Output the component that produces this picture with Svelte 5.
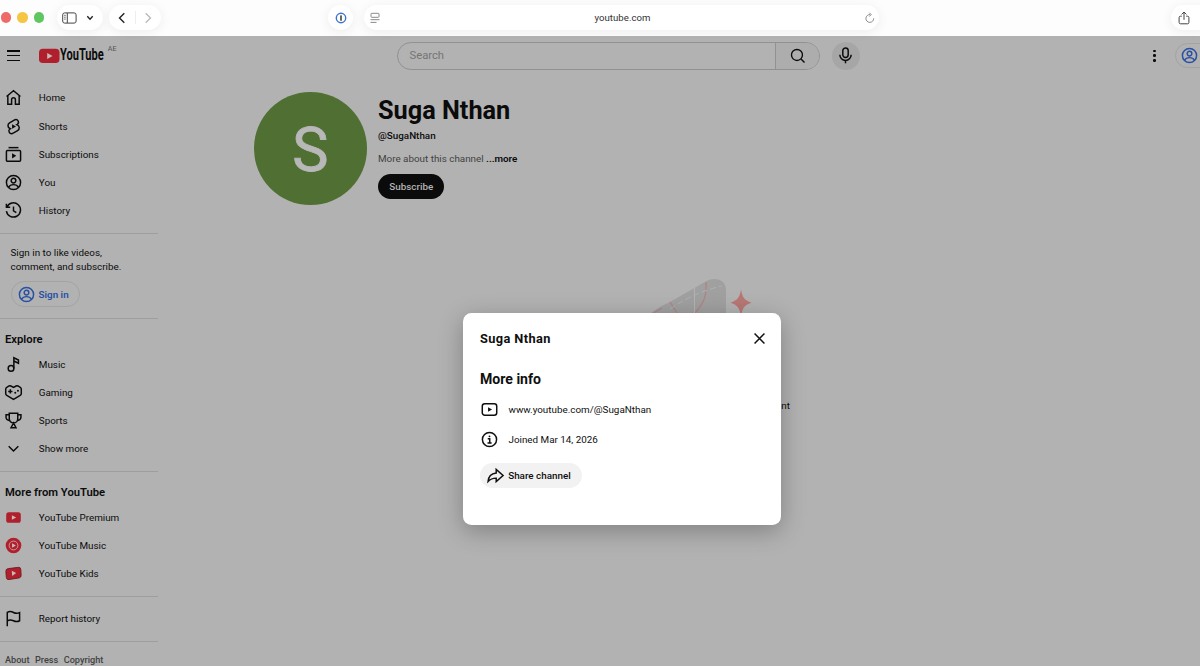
<script lang="ts">
	type Item = { icon: string; label: string };

	const mainItems: Item[] = [
		{ icon: 'home', label: 'Home' },
		{ icon: 'shorts', label: 'Shorts' },
		{ icon: 'subs', label: 'Subscriptions' },
		{ icon: 'user', label: 'You' },
		{ icon: 'history', label: 'History' },
	];

	const explore: Item[] = [
		{ icon: 'music', label: 'Music' },
		{ icon: 'gaming', label: 'Gaming' },
		{ icon: 'sports', label: 'Sports' },
		{ icon: 'chevron', label: 'Show more' },
	];

	const more: Item[] = [
		{ icon: 'premium', label: 'YouTube Premium' },
		{ icon: 'ytmusic', label: 'YouTube Music' },
		{ icon: 'kids', label: 'YouTube Kids' },
	];

	let open = $state(true);
</script>

{#snippet icon(name: string)}
	<svg class="icon" viewBox="0 0 24 24">
		{#if name === 'home'}
			<path d="M2.2 10.6 12 2.4l9.8 8.2M4 9.5V21.4h5.3V15a2.7 2.7 0 0 1 5.4 0v6.4H20V9.5" />
		{:else if name === 'shorts'}
			<path d="M14.2 2.4 6.4 6.9A4.4 4.4 0 0 0 7 14.8l.6.3-.9.5a3.8 3.8 0 0 0 3.6 6.4l7.5-4.3a4.4 4.4 0 0 0-.6-8l-.6-.3.9-.5a3.7 3.7 0 0 0-3.3-6.5Z" />
			<path class="solid" d="m10 8.7 5.5 3.3-5.5 3.3Z" />
		{:else if name === 'subs'}
			<path d="M5 2.3h14" />
			<rect x="2" y="6.3" width="20" height="15.2" rx="1.5" />
			<path class="solid" d="m10 10.3 6 3.6-6 3.6Z" />
		{:else if name === 'user'}
			<circle cx="12" cy="12" r="10" />
			<circle cx="12" cy="9.3" r="3.3" />
			<path d="M5 19c1.4-2.7 4-4 7-4s5.6 1.3 7 4" />
		{:else if name === 'history'}
			<path d="M2 2.3v5.2h5.3M2.7 7.3A10 10 0 1 1 2 12.8M12 6.5v6l4 2.4" />
		{:else if name === 'music'}
			<circle cx="8.5" cy="17.5" r="4" />
			<path d="M12.5 17.5V2.5l6.5 3.2v4.5l-6.5-3.2" />
		{:else if name === 'gaming'}
			<path d="M12 4.8 8.3 2.8a3 3 0 0 0-2.6 0L2.5 4.7A3 3 0 0 0 1 7.3v6.2a3 3 0 0 0 1.5 2.6L12 21.6l9.5-5.5a3 3 0 0 0 1.5-2.6V7.3a3 3 0 0 0-1.5-2.6l-3.2-1.9a3 3 0 0 0-2.6 0Z" />
			<path d="M7.5 7.5v6M4.5 10.5h6" />
			<circle class="solid" cx="14.5" cy="12.5" r="1.4" />
			<circle class="solid" cx="18.3" cy="9.5" r="1.4" />
		{:else if name === 'sports'}
			<path d="M6 1.8h12v7.7a6 6 0 0 1-12 0ZM6 4H1.5v3.5A4.5 4.5 0 0 0 6 12M18 4h4.5v3.5A4.5 4.5 0 0 1 18 12M12 15.5 8.5 22.2h7Z" />
		{:else if name === 'chevron'}
			<path d="m5.2 8.800 6.800 6.800 6.800-6.800" />
		{:else if name === 'flag'}
			<path d="M3.2 23V3.5c3-1.9 6-1.5 8.8 0s5.600 1.700 8.600.2v11.500c-3 1.600-5.800 1.400-8.600 0s-5.800-1.800-8.800.2" />
		{:else if name === 'premium'}
			<rect class="red" x="1.7" y="4.7" width="20.6" height="14.8" rx="3.6" />
			<path class="play" d="m9.7 8.9 6 3.2-6 3.2Z" />
		{:else if name === 'ytmusic'}
			<circle class="red" cx="12" cy="12" r="11" />
			<circle class="ring" cx="12" cy="12" r="6.2" />
			<path class="play" d="m10 8.7 5.3 3.3-5.3 3.3Z" />
		{:else if name === 'kids'}
			<path class="kids" d="M4.5 5.1 19 3.3q3-.3 3.3 2.6l.5 8.6q.2 3-2.8 3.7L5.6 20.6q-3.3.5-3.7-2.800L1.200 9q-.2-3.500 3.300-3.900Z" />
			<path class="play" d="m9.5 8.2 6.3 3.2-5.6 4Z" />
		{:else if name === 'video'}
			<rect x="1.8" y="4" width="20.4" height="16" rx="3.5" />
			<path class="solid" d="m10 8.7 5.6 3.3-5.6 3.3Z" />
		{:else if name === 'info'}
			<circle cx="12" cy="12" r="10" />
			<path d="M9.5 11h2.8v5.500M9.200 16.800h5.800" />
			<circle class="solid" cx="12" cy="7.5" r="1.3" />
		{:else if name === 'share'}
			<path d="M13 3.3v5.2C6 9.3 2 13.5 1.5 20.5c3-3.300 6.700-4.800 11.500-4.800v5l9.700-8.700Z" />
		{:else if name === 'search'}
			<circle cx="10.8" cy="10.8" r="8.5" />
			<path d="m17 17 5.5 5.5" />
		{:else if name === 'mic'}
			<rect x="8.2" y="1.3" width="7.6" height="13.4" rx="3.8" />
			<path d="M4 11a8 8 0 0 0 16 0M12 19v4" />
		{:else if name === 'close'}
			<path d="m5 5 14 14M19 5 5 19" />
		{/if}
	</svg>
{/snippet}

{#snippet row(item: Item)}
	<a class="row" href="#{item.icon}">
		{@render icon(item.icon)}
		<span>{item.label}</span>
	</a>
{/snippet}

<div class="window">
	<div class="toolbar">
		<div class="lights">
			<i class="close-light"></i>
			<i class="min-light"></i>
			<i class="max-light"></i>
		</div>
		<div class="capsule side-toggle">
			<svg width="15" height="12" viewBox="0 0 15 12">
				<rect x=".7" y=".9" width="13.4" height="10.2" rx="2" />
				<path d="M5.3 1v10M2.3 3.3h1.3M2.3 5.2h1.3M2.3 7.1h1.3" />
			</svg>
			<svg width="8" height="6" viewBox="0 0 8 6"><path class="bold" d="M1.3 1.3 4 4.2l2.7-2.9" /></svg>
		</div>
		<div class="capsule nav">
			<svg width="8" height="12" viewBox="0 0 8 12"><path class="bold" d="M6.3 1.2 1.5 6l4.8 4.8" /></svg>
			<span class="split"></span>
			<svg class="off" width="8" height="12" viewBox="0 0 8 12"><path class="bold" d="M1.7 1.2 6.5 6l-4.8 4.8" /></svg>
		</div>
		<div class="capsule extension">
			<svg width="12" height="12" viewBox="0 0 12 12">
				<circle class="op-ring" cx="6" cy="6" r="4.7" />
				<rect class="op-key" x="5" y="3.2" width="2" height="5.6" rx=".6" />
			</svg>
		</div>
		<div class="capsule address">
			<svg width="10" height="12" viewBox="0 0 10 12">
				<rect x="1" y="1.3" width="8" height="4" rx=".8" />
				<path d="M.5 7.7h9M.5 10.4h6" />
			</svg>
			<span class="host">youtube.com</span>
			<svg width="10" height="12" viewBox="0 0 10 12">
				<path d="M8.7 6.300a3.900 3.900 0 1 1-3.500-3.700M4.300.7l1.900 1.900-1.900 1.900" />
			</svg>
		</div>
		<div class="capsule share-btn">
			<svg width="12" height="14" viewBox="0 0 12 14">
				<path d="M3.8 5.200H2.500a1.400 1.400 0 0 0-1.400 1.400v4.800a1.400 1.400 0 0 0 1.400 1.400h7a1.400 1.400 0 0 0 1.400-1.400V6.600a1.400 1.400 0 0 0-1.400-1.400H8.200M6 8.800V1.200M3.600 3.400 6 1l2.400 2.400" />
			</svg>
		</div>
	</div>

	<div class="page">
		<header>
			<button class="burger" aria-label="Guide"><i></i><i></i><i></i></button>
			<svg class="logo" width="21" height="20" viewBox="0 0 21 20">
				<rect class="red" x="0" y="2.7" width="20.5" height="14.4" rx="3.8" />
				<path class="play" d="m8.2 6.9 5.4 3-5.4 3Z" />
			</svg>
			<div class="wordmark"><span>YouTube</span></div>
			<span class="country">AE</span>
			<div class="search">
				<div class="field">Search</div>
				<button class="search-btn" aria-label="Search">{@render icon('search')}</button>
			</div>
			<button class="mic" aria-label="Voice">{@render icon('mic')}</button>
			<div class="dots"><i></i><i></i><i></i></div>
			<button class="account" aria-label="Account">{@render icon('user')}</button>
		</header>

		<div class="body">
			<nav class="sidebar">
				<section>
					{#each mainItems as item}{@render row(item)}{/each}
				</section>
				<section class="signin">
					<p>Sign in to like videos,<br />comment, and subscribe.</p>
					<button class="signin-btn">{@render icon('user')}Sign in</button>
				</section>
				<section>
					<h3>Explore</h3>
					{#each explore as item}{@render row(item)}{/each}
				</section>
				<section>
					<h3>More from YouTube</h3>
					{#each more as item}{@render row(item)}{/each}
				</section>
				<section>
					{@render row({ icon: 'flag', label: 'Report history' })}
				</section>
				<footer><span>About</span><span>Press</span><span>Copyright</span></footer>
			</nav>

			<main>
				<div class="channel">
					<div class="avatar">S</div>
					<div class="meta">
						<h1>Suga Nthan</h1>
						<div class="handle">@SugaNthan</div>
						<div class="about">More about this channel <b>...more</b></div>
						<button class="subscribe">Subscribe</button>
					</div>
				</div>
				<div class="empty">
					<svg width="130" height="60" viewBox="0 0 130 60">
						<path class="cone" d="M-6 42Q2 32 20 24L54 4.500C64-2 75 1 76 11v49H-6Z" />
						<path class="cone-line" d="M56 4c1 15-3 22-11 31M20 24l7 11M2 36l10-6" />
						<path class="cone-light" d="M44.500 9v40" />
						<path class="cone-dash" d="M20 31Q45 14 72 8" />
						<path class="star" d="M91 11.500c1.500 8 3 10.500 10.500 13.200-7.500 2.700-9 5.200-10.500 13.300-1.500-8-3-10.600-10.500-13.300 7.500-2.700 9-5.200 10.500-13.200Z" />
					</svg>
					<p>content</p>
				</div>
			</main>
		</div>
	</div>

	{#if open}
		<div class="dialog" role="dialog">
			<div class="dialog-head">
				<h2>Suga Nthan</h2>
				<button class="x" aria-label="Close" onclick={() => (open = false)}>{@render icon('close')}</button>
			</div>
			<h4>More info</h4>
			<div class="info">{@render icon('video')}<span>www.youtube.com/@SugaNthan</span></div>
			<div class="info">{@render icon('info')}<span>Joined Mar 14, 2026</span></div>
			<button class="share">{@render icon('share')}Share channel</button>
		</div>
	{/if}
</div>

<style>
	:global(body) {
		margin: 0;
		overflow: hidden;
	}

	.window {
		position: relative;
		width: 1200px;
		height: 666px;
		overflow: hidden;
		background: #b2b2b2;
		color: #0b0b0b;
		font-family: Roboto, sans-serif;
		font-size: 9.86px;
	}

	.window * {
		box-sizing: border-box;
	}

	button {
		padding: 0;
		border: 0;
		background: none;
		color: inherit;
		font: inherit;
	}

	h1, h2, h3, h4, p {
		margin: 0;
	}

	svg {
		display: block;
		flex: none;
		fill: none;
		stroke: currentColor;
	}

	.icon {
		width: 17px;
		height: 17px;
		stroke-width: 2.1;
		overflow: visible;
	}

	.solid {
		fill: currentColor;
		stroke: none;
	}

	.red {
		fill: #b01f2c;
		stroke: none;
	}

	.play {
		fill: #c9b9ba;
		stroke: none;
	}

	.ring {
		stroke: #c39a9d;
		stroke-width: 1.4;
	}

	.kids {
		fill: #b01f2c;
		stroke: #6b1a20;
		stroke-width: 1.2;
	}

	/* Browser toolbar */
	.toolbar {
		position: relative;
		z-index: 1;
		display: flex;
		align-items: center;
		height: 36px;
		padding-bottom: 1px;
		background: #fdfdfd;
		color: #444;
	}

	.toolbar > *,
	header > * {
		flex: none;
	}

	.lights {
		display: flex;
		gap: 6px;
		width: 57px;
		padding-left: 1px;
	}

	.lights i {
		width: 10.4px;
		height: 10.4px;
		border-radius: 50%;
	}

	.close-light { background: #ee6a68; }
	.min-light { background: #f5c644; }
	.max-light { background: #5fc75f; }

	.capsule {
		display: flex;
		align-items: center;
		height: 25px;
		border-radius: 13px;
		background: #fff;
		box-shadow: 0 2px 12px rgba(0, 0, 0, 0.07);
	}

	.side-toggle {
		width: 46px;
		padding-left: 5px;
		gap: 9px;
	}

	.bold {
		stroke-width: 1.4;
		stroke: #222;
	}

	.nav {
		width: 52px;
		margin-left: 6px;
		justify-content: space-between;
		padding: 0 9px;
	}

	.split {
		width: 1px;
		height: 13px;
		background: #eee;
	}

	.off .bold {
		stroke: #bbb;
	}

	.extension {
		width: 25px;
		margin-left: 167px;
		justify-content: center;
	}

	.op-ring {
		stroke: #3b73d1;
		stroke-width: 1.4;
	}

	.op-key {
		fill: #6a6a5c;
		stroke: none;
	}

	.address {
		width: 515px;
		margin-left: 11px;
		padding: 0 4px 0 6px;
		justify-content: space-between;
		color: #8a8a8a;
	}

	.host {
		color: #333;
		font-size: 9.6px;
		letter-spacing: 0.05px;
	}

	.share-btn {
		width: 40px;
		margin-left: 292px;
		padding-left: 7px;
	}

	/* Masthead */
	header {
		display: flex;
		align-items: center;
		height: 39.4px;
	}

	.burger {
		width: 13px;
		margin-left: 7px;
		display: grid;
		gap: 3.4px;
	}

	.burger i {
		height: 1.5px;
		background: #0b0b0b;
	}

	.logo {
		margin-left: 18.7px;
	}

	.wordmark {
		width: 46px;
		padding-top: 1px;
		line-height: 20px;
	}

	.wordmark span {
		display: inline-block;
		transform: scaleX(0.67);
		transform-origin: left;
		font-size: 16.5px;
		font-weight: 700;
	}

	.country {
		align-self: flex-start;
		width: 12px;
		margin: 8px 0 0 2px;
		color: #555;
		font-size: 7.2px;
		line-height: 9px;
	}

	.search {
		display: flex;
		width: 423px;
		height: 28.2px;
		margin-left: 277.8px;
		border: 1px solid #919191;
		border-radius: 15px;
		overflow: hidden;
	}

	.field {
		flex: 1;
		padding-left: 11px;
		line-height: 26.5px;
		font-size: 11.26px;
		color: #757575;
	}

	.search-btn {
		width: 44.5px;
		display: grid;
		place-items: center;
		border-left: 1px solid #919191;
		background: #adadad;
	}

	.search-btn .icon {
		width: 15.5px;
		height: 15.5px;
	}

	.mic {
		display: grid;
		place-items: center;
		width: 28px;
		height: 28px;
		margin-left: 11.5px;
		border-radius: 50%;
		background: #a6a6a6;
	}

	.dots {
		display: grid;
		gap: 2px;
		margin-left: 293px;
	}

	.dots i {
		width: 2.7px;
		height: 2.7px;
		border-radius: 50%;
		background: #0b0b0b;
	}

	.account {
		width: 60px;
		height: 25.5px;
		margin-left: 19px;
		padding-left: 5.5px;
		border: 1px solid #a3a3a3;
		border-radius: 13px;
		color: #2850a4;
	}

	/* Sidebar */
	.body {
		display: flex;
	}

	.sidebar {
		width: 157.5px;
		flex: none;
	}

	section {
		padding: 8.4px 0;
		border-bottom: 1px solid #9e9e9e;
	}

	section + section {
		padding-top: 7.4px;
	}

	.row {
		display: flex;
		align-items: center;
		gap: 17px;
		height: 28.16px;
		padding-left: 4.8px;
		color: inherit;
		text-decoration: none;
	}

	h3 {
		height: 23.6px;
		padding-left: 5px;
		font-size: 11.26px;
		font-weight: 600;
		line-height: 25.4px;
	}

	.signin {
		height: 85.4px;
		padding-left: 10.5px;
	}

	.signin p {
		padding-top: 4.6px;
		line-height: 14.1px;
		letter-spacing: 0.02px;
	}

	.signin-btn {
		display: flex;
		align-items: center;
		gap: 4px;
		height: 25.4px;
		margin-top: 7.3px;
		padding: 0 10.5px 0 6px;
		border: 1px solid #a3a3a3;
		border-radius: 13px;
		color: #2850a4;
		font-weight: 600;
	}

	footer {
		display: flex;
		gap: 5.5px;
		padding: 12.6px 0 0 5px;
		color: #424242;
		font-size: 9.15px;
		font-weight: 500;
	}

	/* Channel */
	main {
		flex: 1;
	}

	.channel {
		display: flex;
		padding: 17px 0 0 96.5px;
	}

	.avatar {
		width: 112.7px;
		height: 112.7px;
		border-radius: 50%;
		background: #4f7032;
		color: #b8b8b8;
		font-size: 61px;
		line-height: 116px;
		text-align: center;
		-webkit-text-stroke: 0.8px #b8b8b8;
	}

	.meta {
		padding-left: 11.3px;
	}

	h1 {
		margin-top: 1.4px;
		font-size: 25.3px;
		line-height: 33px;
	}

	.handle {
		margin-top: 2.7px;
		font-weight: 500;
		line-height: 14px;
	}

	.about {
		margin-top: 8.4px;
		color: #424242;
		line-height: 14px;
	}

	.about b {
		color: #0b0b0b;
		font-weight: 600;
	}

	.subscribe {
		width: 66.5px;
		height: 25.3px;
		margin-top: 8px;
		border-radius: 13px;
		background: #0b0b0b;
		color: #b2b2b2;
		font-weight: 500;
	}

	.empty {
		width: 200px;
		margin: 73px 0 0 432.5px;
	}

	.empty svg {
		margin-left: 60px;
		stroke: none;
	}

	.empty p {
		margin-top: 61.5px;
		text-align: right;
	}

	.cone { fill: #a0a0a0; }
	.cone-line { stroke: #ad8587; stroke-width: 1.3; }
	.cone-light { stroke: #b3b3b3; }
	.cone-dash { stroke: #b0b0b0; stroke-dasharray: 6 3; }
	.star { fill: #b87774; }

	/* Dialog sits over the dimmed page */
	.dialog {
		position: absolute;
		left: 463px;
		top: 312.5px;
		z-index: 2;
		width: 317.5px;
		height: 212.5px;
		padding: 17px;
		border-radius: 8.5px;
		background: #fff;
		color: #0f0f0f;
		box-shadow: 0 6px 24px rgba(0, 0, 0, 0.28);
	}

	.dialog-head {
		display: flex;
		align-items: center;
		justify-content: space-between;
		height: 17px;
	}

	h2 {
		font-size: 12.8px;
		letter-spacing: 0.38px;
	}

	.x {
		margin-right: -4px;
	}

	h4 {
		margin-top: 23px;
		font-size: 14.08px;
		line-height: 19px;
	}

	.info {
		display: flex;
		align-items: center;
		gap: 10.2px;
		height: 17px;
		padding-left: 1.3px;
		margin-top: 12.6px;
	}

	h4 + .info {
		margin-top: 12.5px;
	}

	.share {
		display: flex;
		align-items: center;
		gap: 4.5px;
		height: 25.4px;
		margin-top: 15.5px;
		padding: 0 11px 0 6.7px;
		border-radius: 13px;
		background: #f2f2f2;
		font-weight: 500;
	}
</style>
